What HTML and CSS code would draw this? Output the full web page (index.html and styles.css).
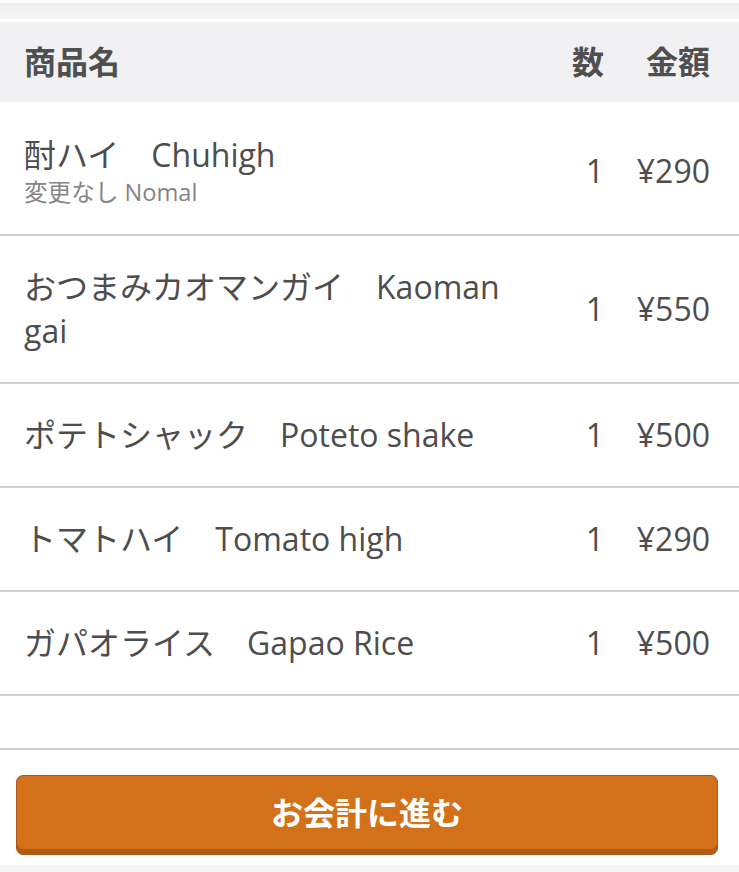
FILE: index.html
```html
<!DOCTYPE html>
<html lang="ja">
<head>
<meta charset="utf-8">
<title>注文確認</title>
<link rel="stylesheet" href="styles.css">
</head>
<body>
<div class="top-gap"></div>
<div class="top-band"></div>
<div class="top-line"></div>
<div class="table">
  <div class="row head">
    <div class="name">商品名</div>
    <div class="qty">数</div>
    <div class="amt">金額</div>
  </div>
  <div class="row item has-sub">
    <div class="name">
      <div class="main">酎ハイ　Chuhigh</div>
      <div class="sub">変更なし Nomal</div>
    </div>
    <div class="qty">1</div>
    <div class="amt">¥290</div>
  </div>
  <div class="row item">
    <div class="name"><div class="main">おつまみカオマンガイ　Kaoman gai</div></div>
    <div class="qty">1</div>
    <div class="amt">¥550</div>
  </div>
  <div class="row item">
    <div class="name"><div class="main">ポテトシャック　Poteto shake</div></div>
    <div class="qty">1</div>
    <div class="amt">¥500</div>
  </div>
  <div class="row item">
    <div class="name"><div class="main">トマトハイ　Tomato high</div></div>
    <div class="qty">1</div>
    <div class="amt">¥290</div>
  </div>
  <div class="row item">
    <div class="name"><div class="main">ガパオライス　Gapao Rice</div></div>
    <div class="qty">1</div>
    <div class="amt">¥500</div>
  </div>
  <div class="row empty"></div>
</div>
<div class="actions">
  <button class="checkout" type="button">お会計に進む</button>
</div>
<div class="foot"></div>
</body>
</html>
```

FILE: styles.css
```css
html, body {
  margin: 0;
  padding: 0;
  background: #ffffff;
}
body {
  font-family: "Open Sans", "Noto Sans CJK JP", sans-serif;
  color: #4d4d4d;
  width: 739px;
  overflow: hidden;
}
.top-gap {
  height: 3px;
  background: #fafafa;
}
.top-band {
  height: 16px;
  background: linear-gradient(#eeeeee, #f6f6f6);
}
.top-line {
  height: 3px;
  background: #ffffff;
}
.table {
  display: flex;
  flex-direction: column;
}
.row {
  display: flex;
  align-items: center;
  padding: 0 29px 0 24px;
  font-size: 32px;
}
.row .name {
  flex: 1;
  min-width: 0;
  padding-right: 20px;
}
.row .qty {
  width: 64px;
  text-align: right;
}
.row .amt {
  width: 106px;
  text-align: right;
}
.head {
  height: 80px;
  background: #f1f1f3;
  font-weight: 700;
  color: #4f4f4f;
  line-height: 44px;
}
.item {
  padding-top: 29px;
  padding-bottom: 29px;
  border-bottom: 2px solid #cfcfcf;
  line-height: 44px;
}
.item.has-sub {
  padding-top: 31px;
  padding-bottom: 26px;
}
.main {
  line-height: 44px;
}
.sub {
  font-size: 23.6px;
  line-height: 31px;
  color: #858585;
}
.empty {
  height: 52px;
  border-bottom: 2px solid #cfcfcf;
}
.actions {
  padding: 25px 21px 10px 16px;
}
.checkout {
  display: block;
  width: 100%;
  height: 80px;
  margin: 0;
  padding: 0 0 4px 0;
  background: #d3711a;
  border: 1px solid #a9591b;
  border-radius: 7px;
  box-shadow: inset 0 -5px 0 #b15b13;
  color: #ffffff;
  font-family: "Open Sans", "Noto Sans CJK JP", sans-serif;
  font-size: 32px;
  font-weight: 700;
  line-height: 40px;
}
.foot {
  height: 20px;
  background: #f6f6f6;
}
```
